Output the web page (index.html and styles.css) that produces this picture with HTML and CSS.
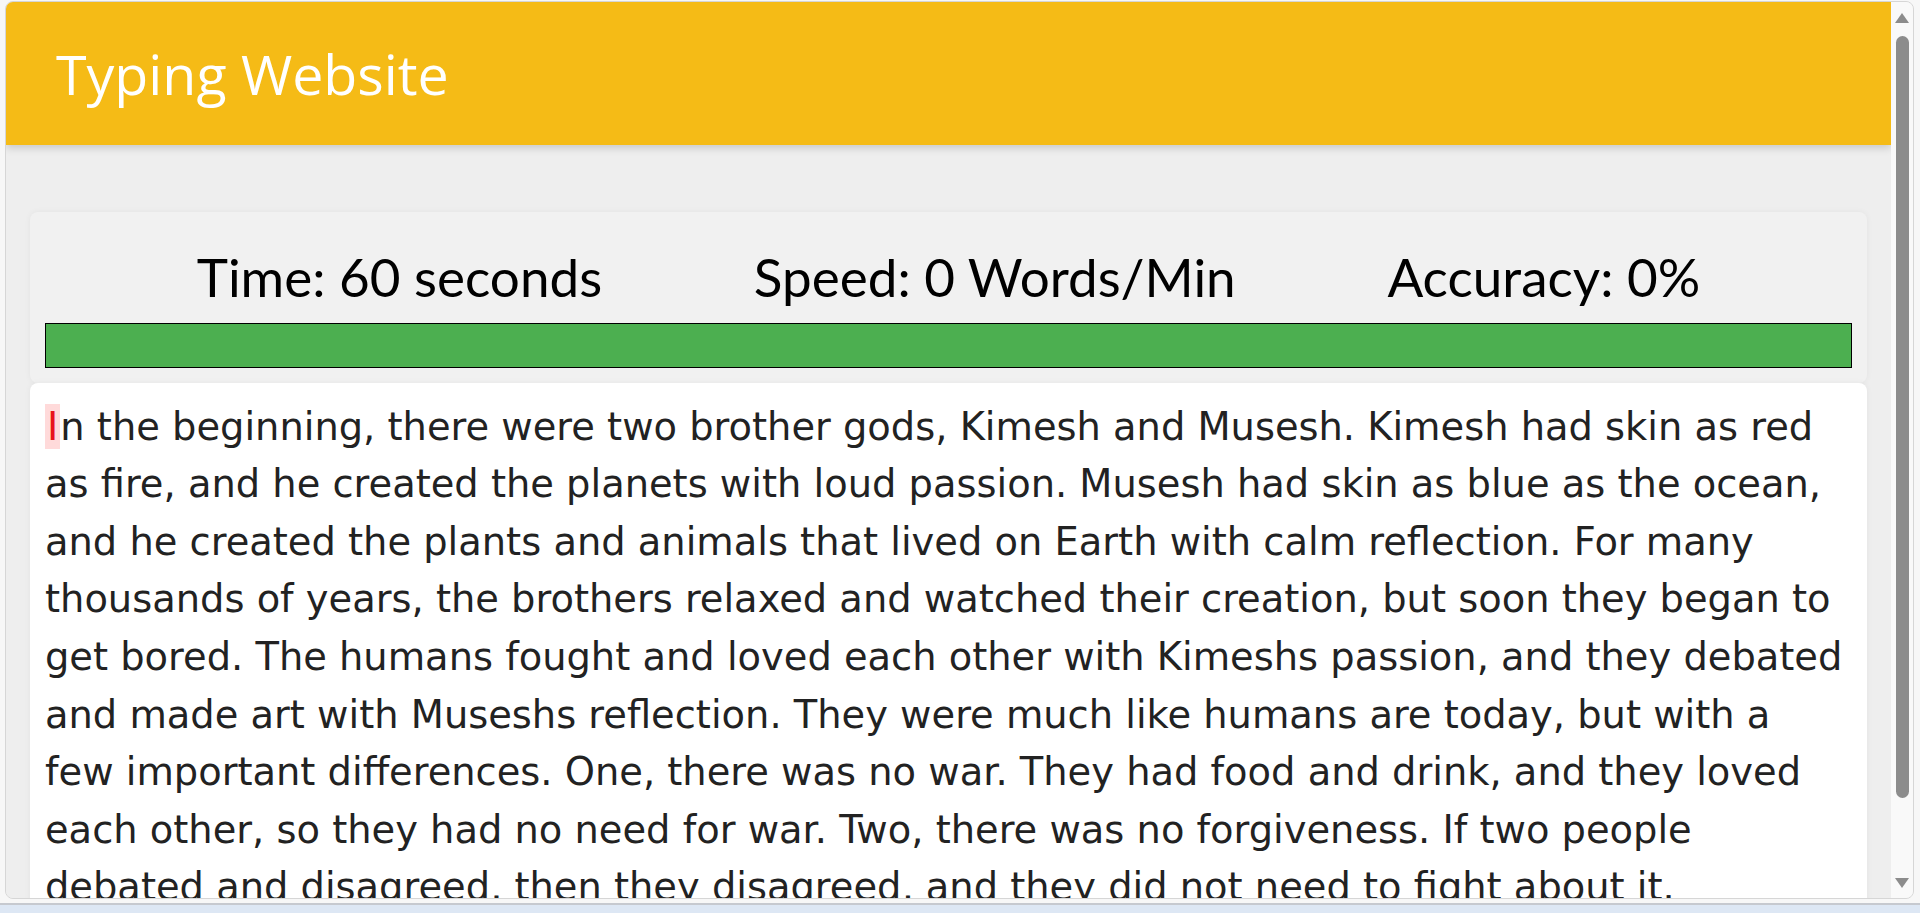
FILE: index.html
```html
<!DOCTYPE html>
<html lang="en">
<head>
<meta charset="utf-8">
<title>Typing Website</title>
<link rel="stylesheet" href="styles.css">
</head>
<body>
<div class="screen">
  <div class="window">
    <div class="viewport">
      <header class="topbar">
        <h1 class="brand">Typing Website</h1>
      </header>
      <main class="content">
        <section class="stats-card">
          <div class="stats">
            <span class="stat">Time: 60 seconds</span>
            <span class="stat">Speed: 0 Words/Min</span>
            <span class="stat">Accuracy: 0%</span>
          </div>
          <div class="progress"><div class="progress-fill" style="width:100%"></div></div>
        </section>
        <section class="text-card">
          <p class="passage"><span class="current">I</span>n the beginning, there were two brother gods, Kimesh and Musesh. Kimesh had skin as red as fire, and he created the planets with loud passion. Musesh had skin as blue as the ocean, and he created the plants and animals that lived on Earth with calm reflection. For many thousands of years, the brothers relaxed and watched their creation, but soon they began to get bored. The humans fought and loved each other with Kimeshs passion, and they debated and made art with Museshs reflection. They were much like humans are today, but with a few important differences. One, there was no war. They had food and drink, and they loved each other, so they had no need for war. Two, there was no forgiveness. If two people debated and disagreed, then they disagreed, and they did not need to fight about it.</p>
        </section>
      </main>
    </div>
    <div class="scrollbar">
      <span class="arrow arrow-up"></span>
      <div class="thumb"></div>
      <span class="arrow arrow-down"></span>
    </div>
  </div>
  <div class="taskbar"></div>
</div>
</body>
</html>
```
FILE: styles.css
```css
html, body {
  margin: 0;
  padding: 0;
}

body {
  background: #f7f7f7;
  width: 1920px;
  height: 913px;
  overflow: hidden;
}

.screen {
  display: flex;
  flex-direction: column;
  height: 913px;
}

.window {
  margin: 1px 6px 0 5px;
  height: 896px;
  border: 1px solid #d6d6d6;
  border-radius: 8px;
  overflow: hidden;
  display: flex;
  background: #eeeeee;
}

.viewport {
  flex: 1;
  display: flex;
  flex-direction: column;
  overflow: hidden;
  background: #eeeeee;
}

.topbar {
  position: relative;
  z-index: 1;
  flex: none;
  height: 143px;
  background: #f5bb16;
  display: flex;
  align-items: center;
  padding-left: 50px;
  box-shadow: 0 3px 8px rgba(0, 0, 0, 0.16);
}

.brand {
  margin: 0;
  font-family: "Comic Sans MS", "Open Sans", sans-serif;
  font-weight: 400;
  font-size: 55.5px;
  color: #ffffff;
}

.content {
  flex: 1;
  padding: 67px 24px 0;
  overflow: hidden;
}

.stats-card {
  background: #f1f1f1;
  border-radius: 8px;
  padding: 15px;
  box-shadow: 0 0 6px rgba(0, 0, 0, 0.05);
}

.stats {
  display: flex;
  justify-content: space-evenly;
  margin: 18px 0 14px;
  font-family: "Lato", sans-serif;
  font-size: 53px;
  line-height: 1.2;
  color: #000000;
  white-space: nowrap;
}

.progress {
  height: 43px;
  border: 1px solid #000000;
  background: #f1f1f1;
}

.progress-fill {
  height: 100%;
  background: #4caf50;
}

.text-card {
  background: #ffffff;
  border-radius: 8px;
  padding: 15px 22px 15px 15px;
  box-shadow: 0 0 6px rgba(0, 0, 0, 0.05);
}

.passage {
  margin: 0;
  font-family: "DejaVu Sans", sans-serif;
  font-size: 38.4px;
  line-height: 57.6px;
  color: #222222;
}

.current {
  padding: 0 2px;
  background: #ffdada;
  color: #e8141b;
}

.scrollbar {
  flex: none;
  width: 22px;
  background: #f9f9f9;
  display: flex;
  flex-direction: column;
  align-items: center;
}

.arrow {
  width: 0;
  height: 0;
  border-left: 7px solid transparent;
  border-right: 7px solid transparent;
}

.arrow-up {
  margin-top: 11px;
  border-bottom: 10px solid #8c8c8c;
}

.arrow-down {
  margin-top: auto;
  margin-bottom: 10px;
  border-top: 10px solid #8c8c8c;
}

.thumb {
  margin-top: 13px;
  width: 13px;
  height: 762px;
  border-radius: 7px;
  background: #8c8c8c;
}

.taskbar {
  margin-top: 4px;
  flex: 1;
  border-top: 2px solid #c6c9cf;
  background: #dde7f4;
}
```
